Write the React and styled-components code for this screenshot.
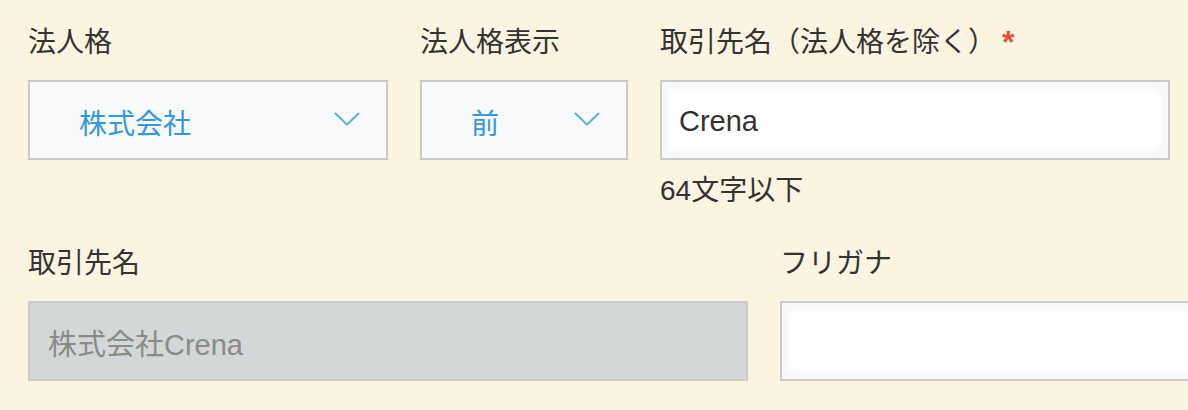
import React from "react";
import styled, { createGlobalStyle } from "styled-components";

const GlobalStyle = createGlobalStyle`
  html, body {
    margin: 0;
    padding: 0;
    background: #faf4e1;
    overflow: hidden;
  }
  body {
    font-family: "Liberation Sans", "Noto Sans CJK JP", sans-serif;
    color: #333333;
  }
`;

const Page = styled.div`
  display: flex;
  flex-direction: column;
  gap: 31px;
  padding: 22px 0 0 28px;
  overflow: hidden;
`;

const Row = styled.div`
  display: flex;
  align-items: flex-start;
  gap: 32px;
`;

const Field = styled.div`
  display: flex;
  flex-direction: column;
  width: ${(p) => p.$width}px;
  flex: none;
`;

const Label = styled.div`
  font-size: 28px;
  line-height: 42px;
  height: 42px;
  color: #333333;
  margin-bottom: 16px;
  white-space: nowrap;
  display: flex;
  align-items: flex-start;
`;

const Required = styled.span`
  color: #e74c3c;
  font-size: 32px;
  line-height: 32px;
  margin-left: 6px;
  margin-top: 4px;
  font-weight: bold;
`;

const SelectBox = styled.div`
  box-sizing: border-box;
  height: 80px;
  border: 2px solid #cacaca;
  background: #f7f9fa;
  display: flex;
  align-items: center;
  justify-content: space-between;
  padding: 4px 26px 0 49px;
  color: #3498db;
  font-size: 28px;
`;

const Chevron = styled.svg`
  width: 26px;
  height: 14px;
  margin-top: -6px;
  flex: none;
`;

const TextInput = styled.input`
  box-sizing: border-box;
  width: 100%;
  height: 80px;
  border: 2px solid #cbcbcb;
  border-radius: 0;
  background: ${(p) => (p.disabled ? "#d4d7d8" : "#ffffff")};
  box-shadow: ${(p) =>
    p.disabled ? "none" : "inset 0 0 0 4px #f7f8f8, inset 0 0 8px 5px #f1f3f3"};
  padding: 2px 0 0 ${(p) => (p.disabled ? "18px" : "17px")};
  font-family: "Liberation Sans", "Noto Sans CJK JP", sans-serif;
  font-size: 29px;
  color: ${(p) => (p.disabled ? "#8a8a86" : "#333333")};
  -webkit-text-fill-color: ${(p) => (p.disabled ? "#8a8a86" : "#333333")};
  outline: none;
  opacity: 1;
  margin: 0;
`;

const Help = styled.div`
  font-size: 28px;
  line-height: 42px;
  margin-top: 10px;
  color: #333333;
`;

function ChevronIcon() {
  return (
    <Chevron viewBox="0 0 26 14" fill="none">
      <path d="M1 1 L13 12.5 L25 1" stroke="#6aaee0" strokeWidth="2.2" />
    </Chevron>
  );
}

export default function App() {
  return (
    <>
      <GlobalStyle />
      <Page>
        <Row>
          <Field $width={360}>
            <Label>法人格</Label>
            <SelectBox>
              <span>株式会社</span>
              <ChevronIcon />
            </SelectBox>
          </Field>
          <Field $width={208}>
            <Label>法人格表示</Label>
            <SelectBox>
              <span>前</span>
              <ChevronIcon />
            </SelectBox>
          </Field>
          <Field $width={510}>
            <Label>
              取引先名（法人格を除く）<Required>*</Required>
            </Label>
            <TextInput value="Crena" readOnly />
            <Help>64文字以下</Help>
          </Field>
        </Row>
        <Row>
          <Field $width={720}>
            <Label>取引先名</Label>
            <TextInput value="株式会社Crena" disabled readOnly />
          </Field>
          <Field $width={720}>
            <Label>フリガナ</Label>
            <TextInput value="" readOnly />
          </Field>
        </Row>
      </Page>
    </>
  );
}
